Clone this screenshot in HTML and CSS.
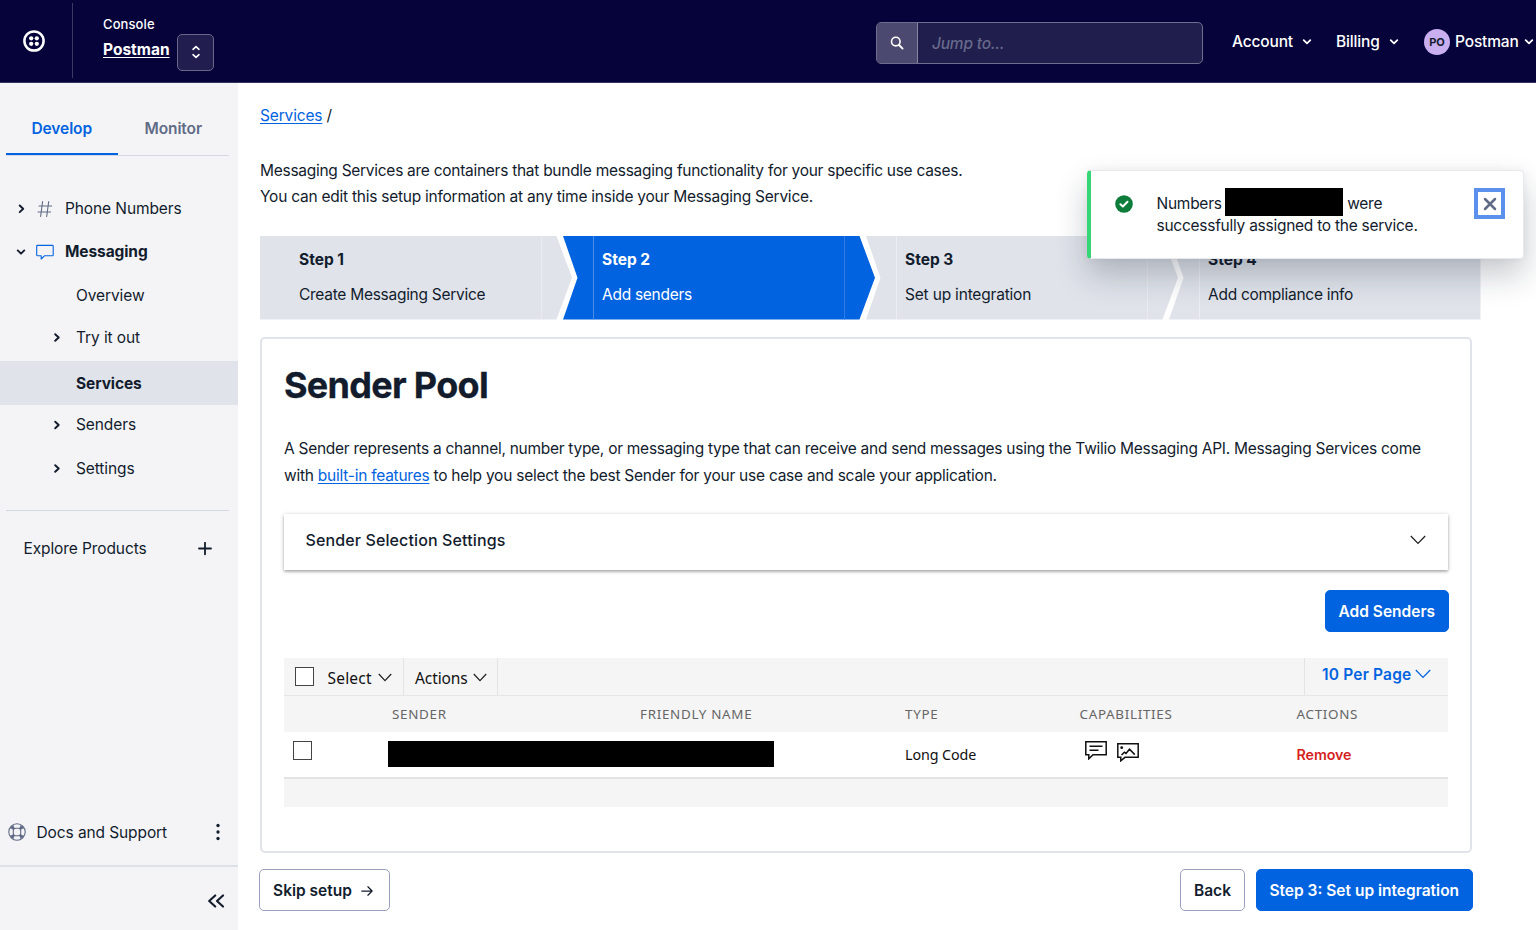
FILE: index.html
```html
<!DOCTYPE html>
<html lang="en">
<head>
<meta charset="utf-8">
<title>Sender Pool - Messaging Services</title>
<link rel="stylesheet" href="styles.css">
</head>
<body>
<header class="topbar">
  <a class="logo" href="#">
    <svg width="24" height="24" viewBox="0 0 24 24"><circle cx="12" cy="12" r="9.6" fill="none" stroke="#fff" stroke-width="2.5"/><g fill="#fff"><circle cx="9.2" cy="9.3" r="2.15"/><circle cx="14.8" cy="9.3" r="2.15"/><circle cx="9.2" cy="14.8" r="2.15"/><circle cx="14.8" cy="14.8" r="2.15"/></g></svg>
  </a>
  <div class="account">
    <div class="account-text"><span class="console">Console</span><a class="account-name" href="#">Postman</a></div>
    <button class="switcher"><svg width="12" height="14" viewBox="0 0 12 14"><path d="M3 4.3 6 1.6 9 4.3M3 9.7 6 12.4 9 9.7" fill="none" stroke="#fff" stroke-width="1.6" stroke-linecap="round" stroke-linejoin="round"/></svg></button>
  </div>
  <div class="search">
    <span class="search-icon"><svg width="16" height="16" viewBox="0 0 16 16"><circle cx="6.8" cy="6.6" r="4.3" fill="none" stroke="#fff" stroke-width="1.6"/><path d="M10 10 13.6 13.6" stroke="#fff" stroke-width="1.9" stroke-linecap="round"/></svg></span>
    <span class="search-text">Jump to...</span>
  </div>
  <nav class="menus">
    <a class="menu menu-account">Account<svg class="caret" viewBox="0 0 10 8"><path d="M1.7 2.2 5 5.4 8.3 2.2"/></svg></a>
    <a class="menu menu-billing">Billing<svg class="caret" viewBox="0 0 10 8"><path d="M1.7 2.2 5 5.4 8.3 2.2"/></svg></a>
    <a class="menu menu-user"><span class="avatar">PO</span>Postman<svg class="caret" viewBox="0 0 10 8"><path d="M1.7 2.2 5 5.4 8.3 2.2"/></svg></a>
  </nav>
</header>

<div class="layout">
  <aside class="sidebar">
    <div class="tabs"><span class="tab tab-active">Develop</span><span class="tab tab-idle">Monitor</span></div>
    <nav class="nav">
      <div class="item top"><svg class="chev" viewBox="0 0 10 10"><path d="M3.7 1.5 7.2 4.8 3.7 8.1"/></svg>
        <svg class="icon" viewBox="0 0 18 18"><path d="M6.6 1.5 4.6 16.5M12.7 1.5 10.7 16.5M3 6H15.6M2 12H14.6" fill="none" stroke="#606b85" stroke-width="1.1" stroke-linecap="round"/></svg><span>Phone Numbers</span></div>
      <div class="item top messaging"><svg class="chev" viewBox="0 0 10 10"><path d="M1.7 3.4 5 6.7 8.3 3.4"/></svg>
        <svg class="icon" viewBox="0 0 18 18"><path d="M1.4 2.4H16.4Q17.2 2.4 17.2 3.2V11.9Q17.2 12.7 16.4 12.7H8.7L5.2 16V12.7H1.6Q.7 12.7.7 11.9V3.2Q.7 2.4 1.4 2.4Z" fill="none" stroke="#0263e0" stroke-width="1.1" stroke-linejoin="round"/></svg><span class="strong">Messaging</span></div>
      <div class="item sub overview">Overview</div>
      <div class="item sub try"><svg class="chev" viewBox="0 0 10 10"><path d="M3.2 1.2 6.7 4.5 3.2 7.8"/></svg>Try it out</div>
      <div class="item sub current">Services</div>
      <div class="item sub senders"><svg class="chev" viewBox="0 0 10 10"><path d="M3.2 1.7 6.7 5 3.2 8.3"/></svg>Senders</div>
      <div class="item sub settings"><svg class="chev" viewBox="0 0 10 10"><path d="M3.2 1.2 6.7 4.5 3.2 7.8"/></svg>Settings</div>
    </nav>
    <div class="explore"><span>Explore Products</span><svg width="14" height="14" viewBox="0 0 14 14"><path d="M7 .7V12.3M1 6.5H13" stroke="#121c2d" stroke-width="1.8" stroke-linecap="round"/></svg></div>
    <div class="docs">
      <svg class="life" width="18" height="18" viewBox="0 0 18 18"><g fill="none" stroke="#606b85"><circle cx="9" cy="9" r="8.2" stroke-width="1.1"/><rect x="5.3" y="5.3" width="7.4" height="7.4" rx="2.4" stroke-width="1.1"/><path d="M3.3 3.3 6 6M14.7 3.3 12 6M3.3 14.7 6 12M14.7 14.7 12 12" stroke-width="2.6"/><path d="M5.4 2V6M12.6 2V6M5.4 12V16M12.6 12V16M2 5.4H6M2 12.6H6M12 5.4H16M12 12.6H16" stroke-width=".7"/></g></svg>
      <span>Docs and Support</span>
      <svg class="dots" width="4" height="18" viewBox="0 0 4 18" fill="#121c2d"><circle cx="2" cy="2.5" r="1.65"/><circle cx="2" cy="9" r="1.65"/><circle cx="2" cy="15.5" r="1.65"/></svg>
    </div>
    <div class="collapse"><svg width="18" height="14" viewBox="0 0 18 14"><path d="M8.2 1.4 2.2 7 8.2 12.6M16 1.4 10 7 16 12.6" fill="none" stroke="#121c2d" stroke-width="2.1" stroke-linecap="round" stroke-linejoin="round"/></svg></div>
  </aside>

  <main class="main">
    <div class="crumbs"><a href="#">Services</a> /</div>
    <p class="intro">Messaging Services are containers that bundle messaging functionality for your specific use cases.<br><span class="second">You can edit this setup information at any time inside your Messaging Service.</span></p>
    <ol class="steps">
      <li class="step first"><b>Step 1</b><span>Create Messaging Service</span></li>
      <li class="step active"><b>Step 2</b><span>Add senders</span></li>
      <li class="step"><b>Step 3</b><span class="integration">Set up integration</span></li>
      <li class="step last"><b>Step 4</b><span>Add compliance info</span></li>
    </ol>
    <section class="panel">
      <h1>Sender Pool</h1>
      <p class="about">A Sender represents a channel, number type, or messaging type that can receive and send messages using the Twilio Messaging API. Messaging Services come<br><span class="second">with <a href="#">built-in features</a> to help you select the best Sender for your use case and scale your application.</span></p>
      <div class="accordion"><span>Sender Selection Settings</span><svg width="16" height="10" viewBox="0 0 16 10"><path d="M.8 1 8 8.4 15.2 1" fill="none" stroke="#222" stroke-width="1.3"/></svg></div>
      <div class="add"><button class="btn primary add-btn">Add Senders</button></div>
      <div class="table">
        <div class="toolbar">
          <div class="tool tool-select"><i class="box"></i><span>Select</span><svg width="14" height="9" viewBox="0 0 14 9"><path d="M.8 1 7 7.6 13.2 1"/></svg></div>
          <div class="tool tool-actions"><span>Actions</span><svg width="14" height="9" viewBox="0 0 14 9"><path d="M.8 1 7 7.6 13.2 1"/></svg></div>
          <div class="tool per-page"><span>10 Per Page</span><svg width="16" height="10" viewBox="0 0 16 10"><path d="M.8 1 8 8.4 15.2 1"/></svg></div>
        </div>
        <div class="row head"><span></span><span>SENDER</span><span>FRIENDLY NAME</span><span>TYPE</span><span>CAPABILITIES</span><span>ACTIONS</span></div>
        <div class="row data">
          <span><i class="box"></i></span>
          <span class="redacted sender-redacted"></span>
          <span class="type">Long Code</span>
          <span class="caps">
            <svg width="22" height="19" viewBox="0 0 22 19"><g fill="none" stroke="#111" stroke-width="1.5"><path d="M.8.8H21.2V13.8H8L3.8 17.8V13.8H.8Z"/><path d="M4.5 5.2H17.5M4.5 9.3H13.5"/></g></svg>
            <svg class="pic" width="22" height="19" viewBox="0 0 22 19"><g fill="none" stroke="#111" stroke-width="1.5"><path d="M.8.8H21.2V14.3H8L3.8 17.8V14.3H.8Z"/><path d="M4.5 12 7.4 9.2 9 10.4 12.5 6.2 17.8 11.6"/></g><circle cx="4.7" cy="4.7" r="1.4" fill="#111"/></svg>
          </span>
          <span class="remove">Remove</span>
        </div>
        <div class="table-foot"></div>
      </div>
    </section>
    <div class="actions">
      <button class="btn skip">Skip setup<svg width="12" height="12" viewBox="0 0 12 12"><path d="M.8 6H11M6.9 1.8 11.1 6 6.9 10.2" fill="none" stroke="#121c2d" stroke-width="1.25" stroke-linecap="round" stroke-linejoin="round"/></svg></button>
      <button class="btn back">Back</button>
      <button class="btn primary next">Step 3: Set up integration</button>
    </div>
  </main>
</div>

<div class="toast">
  <svg class="ok" width="18" height="18" viewBox="0 0 18 18"><circle cx="9" cy="9" r="8.8" fill="#0e7c3a"/><path d="M5.4 9.2 7.9 11.5 12.5 6.8" fill="none" stroke="#fff" stroke-width="2" stroke-linecap="round" stroke-linejoin="round"/></svg>
  <div class="toast-text"><div class="toast-line">Numbers <span class="redacted"></span><span>were</span></div><div>successfully assigned to the service.</div></div>
  <button class="close"><svg width="14" height="14" viewBox="0 0 14 14"><path d="M2 2 12 12M12 2 2 12" stroke="#606b85" stroke-width="2.5" stroke-linecap="round"/></svg></button>
</div>
</body>
</html>
```
FILE: styles.css
```css
* { box-sizing: border-box; }
body { margin: 0; width: 1536px; height: 930px; overflow: hidden; position: relative; background: #fff; color: #121c2d; font: 15.5px/26px Inter, "Liberation Sans", sans-serif; }
p, h1, ol { margin: 0; padding: 0; }
svg { display: block; flex: none; }
a { color: #0263e0; text-decoration: underline; text-underline-offset: 2px; }
button { font: inherit; padding: 0; margin: 0; }

.topbar { height: 83px; background: #06033a; border-bottom: 1px solid #35335f; display: flex; color: #fff; }
.logo { width: 73px; height: 75px; margin-top: 3px; border-right: 1px solid #3b3962; padding: 26px 0 0 22px; }
.account { display: flex; padding-left: 30px; width: 803px; }
.account-text { display: flex; flex-direction: column; padding-top: 14px; width: 74px; }
.console { font-size: 13px; line-height: 20px; font-weight: 500; letter-spacing: .1px; }
.account-name { color: #fff; font-weight: 700; line-height: 20px; margin-top: 6px; text-underline-offset: 2px; }
.switcher { width: 37px; height: 37px; margin-top: 34px; background: #211e4f; border: 1px solid #6a6888; border-radius: 5px; display: flex; align-items: center; justify-content: center; padding-bottom: 1px; color: #fff; }
.search { width: 327px; height: 42px; margin-top: 22px; border: 1px solid #6f6d8e; border-radius: 5px; background: #201e4d; display: flex; overflow: hidden; }
.search-icon { width: 41px; border-right: 1px solid #88869f; background: #4c4971; display: flex; align-items: center; justify-content: center; }
.search-text { padding-left: 14px; line-height: 42px; font-style: italic; font-weight: 500; letter-spacing: -.2px; color: #66698a; }
.menus { display: flex; align-items: center; height: 82px; padding-top: 1px; font-weight: 500; letter-spacing: -.15px; }
.menu { display: flex; align-items: center; color: #fff; text-decoration: none; white-space: nowrap; }
.menu-account { width: 104px; margin-left: 29px; gap: 9px; }
.menu-billing { width: 88px; gap: 9px; }
.menu-user { gap: 5px; }
.caret { width: 10px; height: 8px; fill: none; stroke: #fff; stroke-width: 1.8; stroke-linecap: round; stroke-linejoin: round; }
.avatar { width: 26px; height: 26px; border-radius: 50%; background: #c9aef0; color: #121c2d; font-size: 11px; font-weight: 700; text-align: center; line-height: 26px; }

.layout { display: flex; height: 847px; }
.sidebar { width: 238px; background: #f4f4f6; display: flex; flex-direction: column; letter-spacing: -.1px; }
.tabs { display: flex; margin: 0 9px 0 6px; height: 73px; border-bottom: 1px solid #d5d8e2; font-weight: 600; text-align: center; }
.tab { width: 111.5px; padding-top: 33px; height: 72px; }
.tab-active { color: #0263e0; border-bottom: 2px solid #0263e0; }
.tab-idle { color: #606b85; }
.nav { padding: 31px 0 20px; }
.item { display: flex; align-items: center; height: 43px; }
.chev { width: 10px; height: 10px; fill: none; stroke: #121c2d; stroke-width: 1.9; stroke-linecap: round; stroke-linejoin: round; }
.top { padding-left: 16px; }
.icon { width: 18px; height: 18px; margin: 0 11px 0 10px; }
.messaging { height: 44px; }
.strong { font-weight: 700; }
.sub { padding-left: 76px; }
.sub .chev { margin: 0 14.5px 0 -24.5px; }
.try { height: 41px; margin-bottom: 3px; }
.current { height: 44px; background: #e1e3ea; font-weight: 700; padding-top: 1px; }
.senders { height: 40px; }
.settings { height: 45px; padding-top: 2px; }
.explore { margin: 0 9px 0 6px; border-top: 1px solid #d3d6e3; height: 76px; padding: 0 17px 0 17.5px; display: flex; justify-content: space-between; align-items: center; }
.docs { margin-top: auto; display: flex; align-items: center; height: 66px; padding: 0 18px 0 8px; }
.docs span { margin-left: 10.5px; flex: 1; padding-top: 1px; }
.collapse { height: 65px; border-top: 2px solid #dfe1ea; display: flex; justify-content: flex-end; align-items: center; padding: 5px 13px 0 0; }

.main { flex: 1; padding: 20px 0 0 22px; letter-spacing: -.275px; }
.crumbs { height: 26px; letter-spacing: -.15px; }
.intro { margin-top: 29px; height: 52px; white-space: nowrap; }
.second { letter-spacing: -.245px; }
.steps { margin-top: 26px; height: 83.5px; width: 1220.5px; display: flex; list-style: none; }
.step { width: 312px; flex: none; margin-left: -9px; padding: 11px 0 0 39px; display: flex; flex-direction: column; gap: 9px; white-space: nowrap; background: linear-gradient(90deg, transparent 30px, #eceef3 30px, #eceef3 31px, transparent 31px, transparent 281px, #e9ebf0 281px, #e9ebf0 282px, transparent 282px) #e0e3ea; clip-path: polygon(0 0, calc(100% - 15.5px) 0, 100% 50%, calc(100% - 15.5px) 100%, 0 100%, 14.5px 50%); }
.first { margin-left: 0; background: linear-gradient(90deg, transparent 281px, #e9ebf0 281px, #e9ebf0 282px, transparent 282px) #e0e3ea; clip-path: polygon(0 0, calc(100% - 15.5px) 0, 100% 50%, calc(100% - 15.5px) 100%, 0 100%); }
.active { color: #fff; background: linear-gradient(90deg, transparent 30px, #4a8de9 30px, #4a8de9 31px, transparent 31px, transparent 281px, #2f7ae4 281px, #2f7ae4 282px, transparent 282px) #0263e0; }
.last { width: 311.5px; background: linear-gradient(90deg, transparent 30px, #eceef3 30px, #eceef3 31px, transparent 31px) #e0e3ea; clip-path: polygon(0 0, 100% 0, 100% 100%, 0 100%, 14.5px 50%); }
.step b { font-weight: 700; letter-spacing: 0; }
.integration { letter-spacing: -.19px; }

.panel { margin-top: 17.5px; width: 1212px; height: 515.5px; border: 2px solid #e1e3ea; border-radius: 5px; padding: 22px 22px 0 22px; }
h1 { font-size: 36px; line-height: 48px; font-weight: 700; letter-spacing: -.7px; -webkit-text-stroke: .3px #121c2d; }
.about { margin-top: 27px; line-height: 26.5px; white-space: nowrap; }
.accordion { margin: 25px 0 0 -.5px; height: 56px; padding: 0 22px 4px; display: flex; align-items: center; justify-content: space-between; font-weight: 500; font-size: 16px; letter-spacing: .12px; box-shadow: 0 1px 4px rgba(0,0,0,.28), 0 2px 2px rgba(0,0,0,.14); }
.add { display: flex; justify-content: flex-end; margin: 20px -.8px 0 0; }
.btn { height: 42px; border-radius: 5px; border: 1px solid #9a9fbd; background: #fff; color: #121c2d; font-weight: 600; letter-spacing: 0; white-space: nowrap; display: flex; align-items: center; justify-content: center; padding-top: 2px; }
.btn.primary { background: #0263e0; border-color: #0263e0; color: #fff; }
.add-btn { width: 124px; }
.table { margin-top: 26px; font-family: "Noto Sans", "Open Sans", sans-serif; color: #111; letter-spacing: 0; }
.toolbar { display: flex; height: 38px; background: #f5f5f5; border-bottom: 1px solid #e6e6e6; }
.tool { display: flex; align-items: center; padding-top: 2px; }
.tool svg { fill: none; stroke: #222; stroke-width: 1.25; }
.tool-select { width: 120px; padding-left: 10.5px; border-right: 1px solid #e4e4e4; }
.tool-select .box { margin-top: -2px; }
.tool-select span { margin: 0 6px 0 14px; letter-spacing: .2px; }
.tool-actions { width: 94px; padding-left: 11px; gap: 5px; border-right: 1px solid #e4e4e4; }
.tool-actions span { letter-spacing: -.1px; }
.per-page { margin-left: auto; width: 144px; padding: 0 0 4px 17px; gap: 4px; border-left: 1px solid #e4e4e4; color: #0263e0; font-family: Inter, sans-serif; font-weight: 600; letter-spacing: .18px; }
.per-page svg { stroke: #0263e0; margin-top: -2px; }
.box { display: block; width: 19px; height: 19px; border: 1px solid #444; background: #fff; flex: none; }
.row { display: grid; grid-template-columns: 108px 248px 265px 174.5px 217px 1fr; }
.head { height: 36px; background: #f5f5f5; line-height: 36px; font-size: 13.4px; letter-spacing: .7px; color: #666; }
.data { height: 46.5px; border-bottom: 2px solid #e2e3e5; font-size: 14.3px; }
.data .box { margin: 9px 0 0 8.5px; }
.redacted { background: #000; }
.sender-redacted { grid-column: 2 / 4; width: 386px; height: 26px; margin: 9px 0 0 -4.5px; }
.type, .remove { line-height: 45px; letter-spacing: -.1px; }
.caps { display: flex; gap: 10px; padding: 9px 0 0 5.5px; }
.pic { margin-top: 2px; }
.remove { color: #d61f1f; font-weight: 600; font-family: Inter, sans-serif; }
.table-foot { height: 28px; background: #f5f5f5; }

.actions { display: flex; width: 1214px; margin: 16.5px 0 0 -1px; }
.skip { width: 131px; gap: 9px; padding-right: 3px; margin-right: auto; }
.back { width: 65px; margin-right: 10.5px; }
.next { width: 217.5px; }

.toast { position: absolute; left: 1087px; top: 170px; width: 437px; height: 89px; background: #fff; border: 1px solid #e8e9ef; border-left: 4px solid #36d576; border-radius: 4px; box-shadow: 0 16px 32px rgba(18,28,45,.24), 0 0 8px rgba(18,28,45,.05); display: flex; padding: 17px 18px 0 23.5px; letter-spacing: -.26px; }
.ok { margin-top: 7px; }
.toast-text { margin: 5px 0 0 24px; line-height: 22px; flex: 1; white-space: nowrap; }
.toast-line { display: flex; height: 22px; line-height: 22px; }
.toast-line .redacted { width: 118px; height: 28px; margin: -5px 4.5px 0 3px; }
.close { width: 31px; height: 31px; border: 4px solid #5b90ec; background: #fff; display: flex; align-items: center; justify-content: center; }
```
